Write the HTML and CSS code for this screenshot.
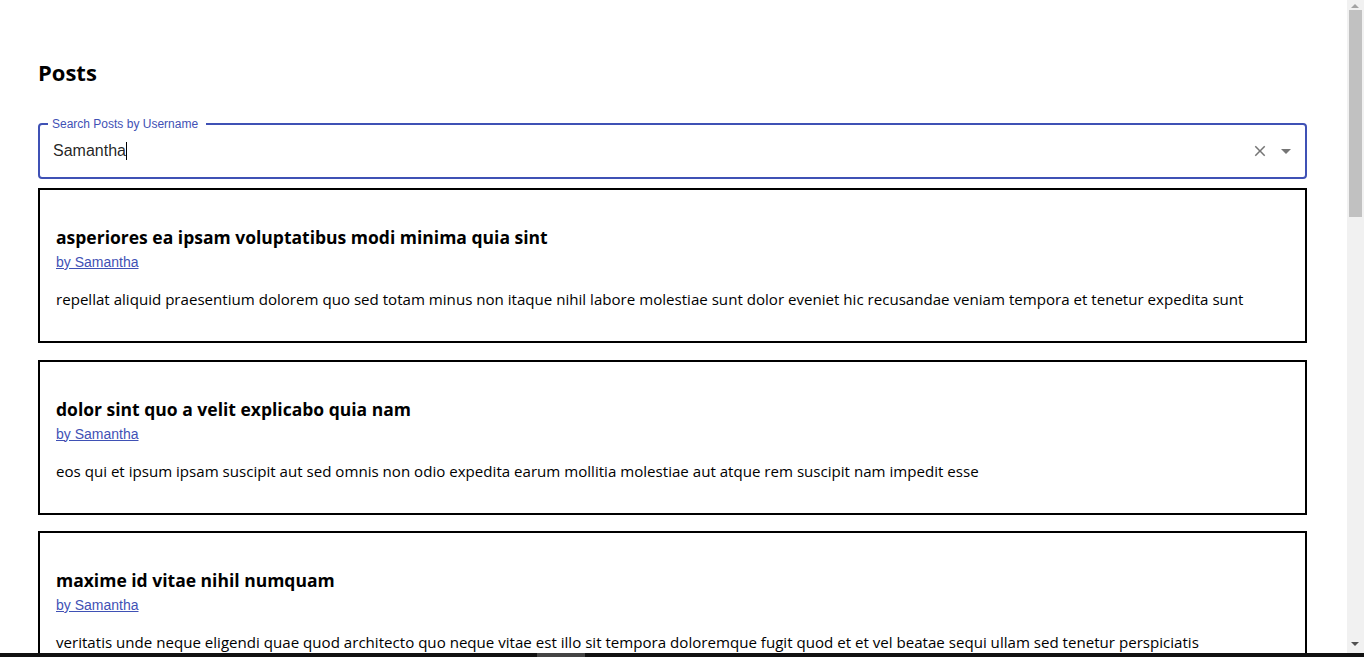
FILE: index.html
```html
<!DOCTYPE html>
<html lang="en">
<head>
<meta charset="utf-8">
<title>Posts</title>
<link rel="stylesheet" href="styles.css">
</head>
<body>
<div class="page">
  <h2 class="page-title">Posts</h2>

  <div class="search">
    <label class="search-label">Search Posts by Username</label>
    <div class="search-row">
      <span class="search-value">Samantha<span class="caret"></span></span>
      <span class="search-icons">
        <svg class="icon-clear" width="20" height="20" viewBox="0 0 24 24"><path d="M19 6.41L17.59 5 12 10.59 6.41 5 5 6.41 10.59 12 5 17.59 6.41 19 12 13.41 17.59 19 19 17.59 13.41 12z" fill="#757575"/></svg>
        <svg class="icon-arrow" width="24" height="24" viewBox="0 0 24 24"><path d="M7 10l5 5 5-5z" fill="#757575"/></svg>
      </span>
    </div>
  </div>

  <div class="posts">
    <article class="post">
      <h3 class="post-title">asperiores ea ipsam voluptatibus modi minima quia sint</h3>
      <a class="post-author" href="#">by Samantha</a>
      <p class="post-body">repellat aliquid praesentium dolorem quo sed totam minus non itaque nihil labore molestiae sunt dolor eveniet hic recusandae veniam tempora et tenetur expedita sunt</p>
    </article>
    <article class="post">
      <h3 class="post-title">dolor sint quo a velit explicabo quia nam</h3>
      <a class="post-author" href="#">by Samantha</a>
      <p class="post-body">eos qui et ipsum ipsam suscipit aut sed omnis non odio expedita earum mollitia molestiae aut atque rem suscipit nam impedit esse</p>
    </article>
    <article class="post">
      <h3 class="post-title">maxime id vitae nihil numquam</h3>
      <a class="post-author" href="#">by Samantha</a>
      <p class="post-body">veritatis unde neque eligendi quae quod architecto quo neque vitae est illo sit tempora doloremque fugit quod et et vel beatae sequi ullam sed tenetur perspiciatis</p>
    </article>
  </div>
</div>

<div class="scrollbar">
  <span class="sb-up"></span>
  <span class="sb-thumb"></span>
  <span class="sb-down"></span>
</div>
<div class="taskbar"><span class="taskbar-item"></span></div>
</body>
</html>
```
FILE: styles.css
```css
html, body {
  height: 100%;
  overflow: hidden;
}
body {
  margin: 8px;
  background: #fff;
  font-family: "Open Sans", "Noto Sans", sans-serif;
  color: #000;
}
.page {
  padding: 28px 49px 0 30px;
}
.page-title {
  font-size: 22px;
  font-weight: 700;
  margin: 20px 0 0;
  line-height: 32px;
}
.search {
  position: relative;
  margin: 35px 0 9px;
  height: 56px;
  border: 2px solid #3f51b5;
  border-radius: 4px;
  box-sizing: border-box;
  font-family: "Liberation Sans", Arial, sans-serif;
}
.search-label {
  position: absolute;
  top: -8px;
  left: 8px;
  padding: 0 8px 0 4px;
  background: #fff;
  font-size: 12px;
  line-height: 14px;
  color: #3f51b5;
}
.search-row {
  display: flex;
  align-items: center;
  height: 100%;
  padding: 0 7px 0 13px;
}
.search-value {
  flex: 1;
  font-size: 16px;
  color: rgba(0,0,0,0.87);
  display: flex;
  align-items: center;
}
.caret {
  display: inline-block;
  width: 1px;
  height: 18px;
  background: #000;
}
.search-icons {
  display: flex;
  align-items: center;
  gap: 5px;
}
.icon-clear { width: 18px; height: 18px; }
.posts {
  display: flex;
  flex-direction: column;
  gap: 16.5px;
}
.post {
  border: 2px solid #000;
  padding: 0 16px;
}
.post-title {
  font-size: 17.5px;
  font-weight: 700;
  margin: 35px 0 0;
  line-height: 25px;
}
.post-author {
  display: block;
  font-family: "Liberation Sans", Arial, sans-serif;
  font-size: 14px;
  line-height: 20px;
  margin-top: 2px;
  color: #3f51b5;
  text-decoration: underline;
}
.post-body {
  font-size: 15.1px;
  line-height: 21px;
  margin: 17px 0 31px;
}
.scrollbar {
  position: fixed;
  top: 0;
  right: 0;
  width: 17px;
  height: 100%;
  background: #f1f1f1;
}
.sb-thumb {
  position: absolute;
  top: 10px;
  left: 2px;
  width: 13px;
  height: 207px;
  background: #c1c1c1;
}
.sb-up, .sb-down {
  position: absolute;
  left: 4px;
  width: 0;
  height: 0;
  border-left: 4px solid transparent;
  border-right: 4px solid transparent;
}
.sb-up { top: 4px; border-bottom: 4px solid #a3a3a3; }
.sb-down { bottom: 11px; border-top: 4px solid #505050; }
.taskbar {
  position: fixed;
  left: 0;
  bottom: 0;
  width: 100%;
  height: 4px;
  background: #111;
}
.taskbar-item {
  position: absolute;
  left: 537px;
  width: 48px;
  height: 4px;
  background: #444;
}
```
